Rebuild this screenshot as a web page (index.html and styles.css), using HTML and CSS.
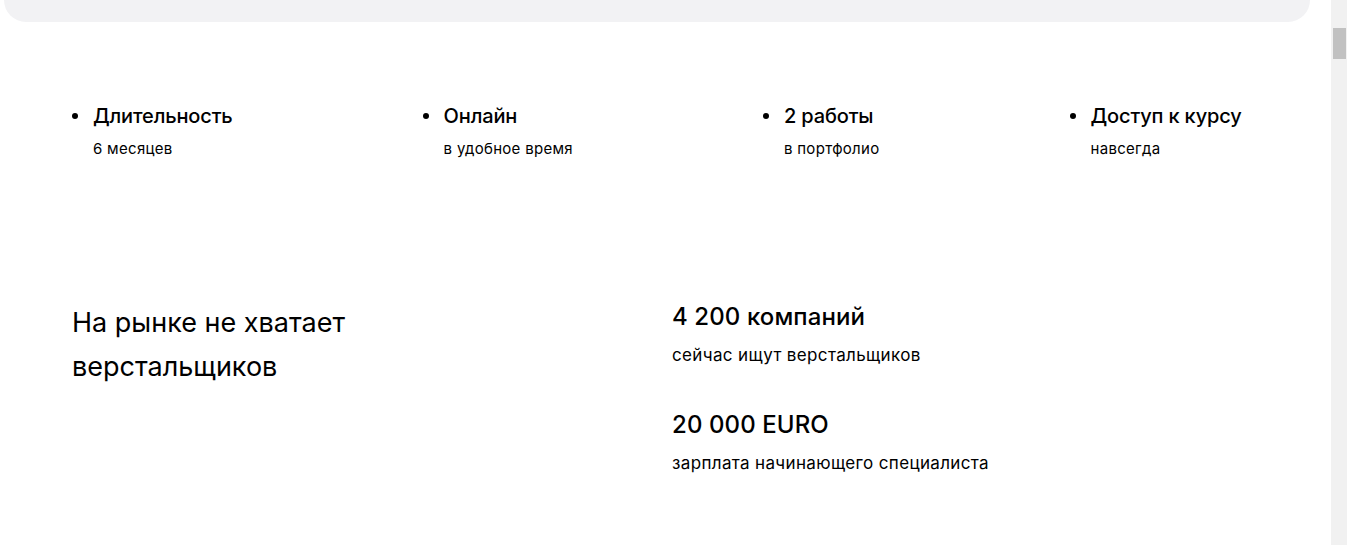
FILE: index.html
```html
<!DOCTYPE html>
<html lang="ru">
<head>
<meta charset="utf-8">
<title>Курс верстальщика</title>
<link rel="stylesheet" href="styles.css">
</head>
<body>
<div class="page">
  <main class="content">
    <div class="top-panel"></div>

    <ul class="features">
      <li class="feature">
        <span class="dot"></span>
        <span class="feature-title">Длительность</span>
        <span class="feature-sub">6 месяцев</span>
      </li>
      <li class="feature">
        <span class="dot"></span>
        <span class="feature-title">Онлайн</span>
        <span class="feature-sub">в удобное время</span>
      </li>
      <li class="feature">
        <span class="dot"></span>
        <span class="feature-title">2 работы</span>
        <span class="feature-sub">в портфолио</span>
      </li>
      <li class="feature">
        <span class="dot"></span>
        <span class="feature-title">Доступ к курсу</span>
        <span class="feature-sub">навсегда</span>
      </li>
    </ul>

    <section class="market">
      <h2 class="market-title">На рынке не хватает<br>верстальщиков</h2>
      <div class="stats">
        <div class="stat">
          <h3 class="stat-value">4 200 компаний</h3>
          <p class="stat-text">сейчас ищут верстальщиков</p>
        </div>
        <div class="stat">
          <h3 class="stat-value">20 000 EURO</h3>
          <p class="stat-text">зарплата начинающего специалиста</p>
        </div>
      </div>
    </section>
  </main>
  <div class="scrollbar"><div class="thumb"></div></div>
</div>
</body>
</html>
```
FILE: styles.css
```css
html, body {
  margin: 0;
  padding: 0;
  height: 545px;
  overflow: hidden;
  background: #fff;
}
body {
  font-family: Inter, "Noto Sans", sans-serif;
  color: #000;
}
.page {
  display: flex;
  height: 545px;
}
.content {
  width: 1331px;
  flex: none;
}
.scrollbar {
  width: 16px;
  flex: none;
  background: #f1f1f1;
  padding: 28px 1px 0 2px;
  box-sizing: border-box;
}
.thumb {
  height: 31px;
  background: #c1c1c1;
}
.top-panel {
  margin-left: 4px;
  width: 1306px;
  height: 22px;
  background: #f2f2f4;
  border-radius: 0 0 24px 24px;
}
.features {
  list-style: none;
  margin: 82px 0 0;
  padding: 0 0 0 72px;
  display: flex;
  gap: 190px;
}
.feature {
  display: grid;
  grid-template-columns: 21px auto;
  row-gap: 11px;
}
.dot {
  width: 6px;
  height: 6px;
  border-radius: 50%;
  background: #000;
  align-self: center;
}
.feature-title {
  font-size: 20px;
  line-height: 24px;
  font-weight: 500;
  letter-spacing: -0.15px;
}
.feature-sub {
  grid-column: 2;
  font-size: 15px;
  line-height: 20px;
  letter-spacing: 0.3px;
}
.market {
  margin-top: 142px;
  padding-left: 72px;
  display: grid;
  grid-template-columns: 600px auto;
}
.market-title {
  margin: 0;
  font-size: 27px;
  line-height: 44px;
  font-weight: 400;
}
.stats {
  padding-top: 1px;
}
.stat + .stat {
  margin-top: 43px;
}
.stat-value {
  margin: 0;
  font-size: 24px;
  line-height: 30px;
  font-weight: 500;
  letter-spacing: 0.1px;
}
.stat-text {
  margin: 11px 0 0;
  font-size: 17px;
  line-height: 24px;
  letter-spacing: 0.35px;
}
```
